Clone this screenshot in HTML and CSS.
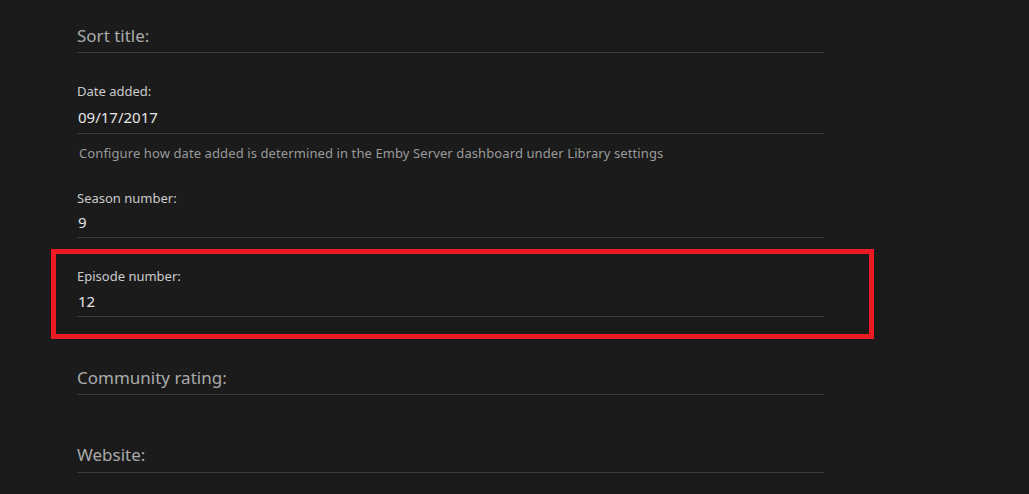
FILE: index.html
```html
<!DOCTYPE html>
<html lang="en">
<head>
<meta charset="utf-8">
<title>Edit metadata</title>
<link rel="stylesheet" href="styles.css">
</head>
<body>
<div class="form">
  <div class="field field-big field-sort">
    <div class="input-big">Sort title:</div>
  </div>
  <div class="field field-small field-date">
    <div class="label">Date added:</div>
    <div class="value">09/17/2017</div>
  </div>
  <div class="help">Configure how date added is determined in the Emby Server dashboard under Library settings</div>
  <div class="field field-small field-season">
    <div class="label">Season number:</div>
    <div class="value">9</div>
  </div>
  <div class="field field-small field-episode highlighted">
    <div class="label">Episode number:</div>
    <div class="value">12</div>
  </div>
  <div class="field field-big field-community">
    <div class="input-big">Community rating:</div>
  </div>
  <div class="field field-big field-website">
    <div class="input-big">Website:</div>
  </div>
</div>
</body>
</html>
```
FILE: styles.css
```css
html, body {
  margin: 0;
  padding: 0;
  background: #1b1b1b;
  height: 100%;
  overflow: hidden;
}
body {
  font-family: "Noto Sans", "Open Sans", sans-serif;
}
.form {
  width: 747px;
  margin-left: 77px;
}
.field {
  position: relative;
}
.input-big {
  font-size: 17px;
  line-height: 24px;
  color: #aaaaaa;
  padding-bottom: 4px;
  border-bottom: 1px solid #3a3a3a;
}
.field-sort .input-big { padding-top: 24px; }
.field-community { margin-top: 49px; }
.field-website { margin-top: 48px; }
.field-website .input-big { padding-bottom: 5px; }

.label {
  font-size: 13px;
  line-height: 18px;
  color: #cbcbcb;
}
.value {
  font-size: 15px;
  line-height: 20px;
  color: #e4e4e4;
  margin-top: 7px;
  padding-bottom: 6px;
  border-bottom: 1px solid #3a3a3a;
  padding-left: 1px;
}
.field-date { margin-top: 29px; }
.field-season { margin-top: 27px; }
.field-season .value { margin-top: 5px; padding-bottom: 5px; }
.field-episode { margin-top: 29px; }
.field-episode .value { margin-top: 6px; padding-bottom: 5px; }
.help {
  font-size: 13px;
  line-height: 18px;
  letter-spacing: 0.1px;
  color: #9a9a9a;
  margin-top: 10px;
  padding-left: 2px;
}
.highlighted::after {
  content: "";
  position: absolute;
  top: -18px;
  left: -26px;
  right: -50px;
  bottom: -22px;
  border: 5px solid #ed1c24;
  pointer-events: none;
}
```
